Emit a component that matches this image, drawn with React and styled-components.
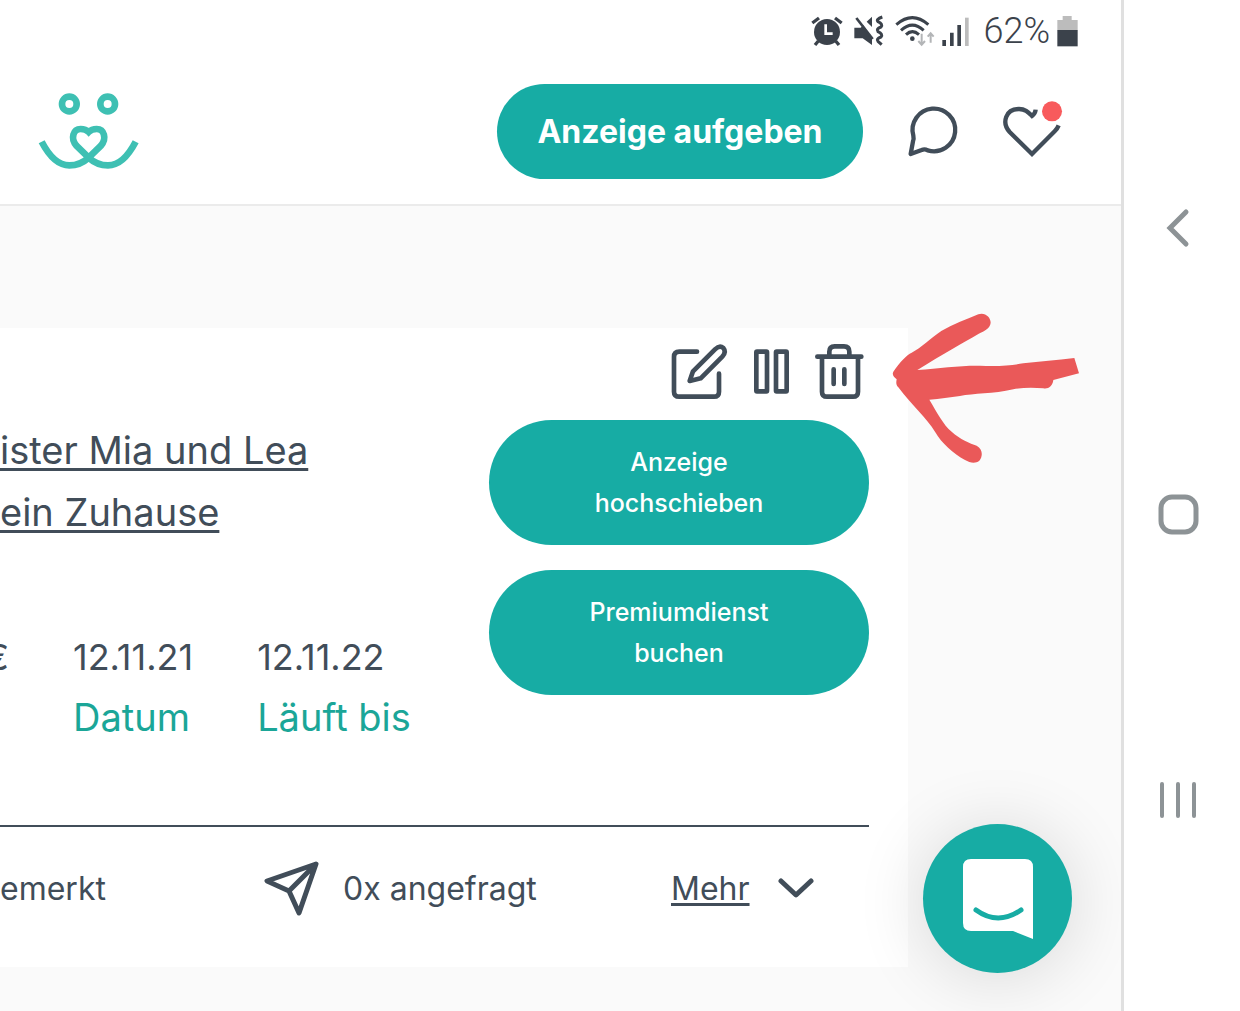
import React from "react";

import styled, {createGlobalStyle} from "styled-components";

const teal = "#17aca4";
const slate = "#414d59";

const GlobalStyle = createGlobalStyle`
    * {
      box-sizing: border-box;
    }

    body {
      margin: 0;
      background: #fff;
      color: ${slate};
      font-family: Inter, "Liberation Sans", sans-serif;
    }

    button {
      border: 0;
      padding: 0;
      background: none;
      color: inherit;
      font: inherit;
      cursor: pointer;
    }

    svg {
      display: block;
      flex: none;
    }
`;

const Page = styled.div`
    display: grid;
    grid-template-columns: minmax(0, 1fr) 119px;
    min-height: 100vh;
`;

const Screen = styled.div`
    position: relative;
    display: flex;
    flex-direction: column;
    overflow: hidden;
    background: #fafafa;
`;

const StatusBar = styled.div`
    display: flex;
    align-items: center;
    justify-content: flex-end;
    gap: 7px;
    height: 59px;
    padding: 2px 43px 0 0;
    background: #fff;
    color: #3b424b;
`;

const BatteryLevel = styled.span`
    font-family: Roboto, sans-serif;
    font-size: 36px;
    font-weight: 300;
    line-height: 40px;
`;

const Header = styled.header`
    display: flex;
    align-items: center;
    gap: 44px;
    height: 147px;
    padding: 0 58px 0 37px;
    border-bottom: 2px solid #ebebeb;
    background: #fff;
`;

const LogoLink = styled.a`
    margin-right: auto;
    color: #3ec0b3;
`;

const Pill = styled.button`
    border-radius: 64px;
    background: ${teal};
    color: #fff;
`;

const PostButton = styled(Pill)`
    min-width: 366px;
    height: 95px;
    font-size: 32px;
    font-weight: 700;
`;

const IconButton = styled.button`
    svg {
      overflow: visible;
    }
`;

const Card = styled.article`
    position: relative;
    margin: 122px 213px 44px 0;
    padding-right: 39px;
    background: #fff;
`;

const CardBody = styled.div`
    display: grid;
    grid-template-columns: minmax(0, 1fr) 380px;
    min-height: 497px;
    padding-top: 15px;
`;

const Info = styled.div`
    padding-top: 76px;
`;

const Title = styled.h2`
    margin: 0 0 84px;
    font-size: 38px;
    font-weight: 400;
    line-height: 62px;

    a {
      color: inherit;
      text-decoration-thickness: 3px;
      text-underline-offset: 4px;
    }
`;

const Facts = styled.dl`
    display: flex;
    gap: 64px;
    margin: 0 0 0 -15px;
`;

const Fact = styled.div`
    display: flex;
    flex-direction: column-reverse;
    justify-content: flex-end;
    min-height: 120px;
    line-height: 60px;

    dt {
      color: #1ba698;
      font-size: 38px;
    }

    dd {
      margin: 0;
      font-size: 36px;
    }
`;

const Actions = styled.div`
    display: flex;
    flex-direction: column;
    gap: 25px;
`;

const Tools = styled.div`
    display: flex;
    justify-content: flex-end;
    gap: 26px;
    padding-right: 5px;
    margin-bottom: -5px;
`;

const ActionButton = styled(Pill)`
    height: 125px;
    padding: 0 80px;
    font-size: 25px;
    font-weight: 500;
    line-height: 41px;
`;

const CardFooter = styled.footer`
    display: grid;
    grid-template-columns: 263px 408px 1fr;
    align-items: center;
    height: 142px;
    padding-bottom: 18px;
    border-top: 2px solid ${slate};
    font-size: 32px;
`;

const Stat = styled.span`
    display: flex;
    align-items: center;
    gap: 23px;
`;

const MoreButton = styled.button`
    display: flex;
    align-items: center;
    gap: 28px;

    span {
      text-decoration: underline;
      text-decoration-thickness: 3px;
      text-underline-offset: 3px;
    }
`;

const Arrow = styled.svg`
    position: absolute;
    top: -16px;
    left: calc(100% - 16px);
`;

const ChatLauncher = styled.button`
    position: absolute;
    right: 49px;
    bottom: 38px;
    display: grid;
    place-items: center;
    width: 149px;
    height: 149px;
    border-radius: 50%;
    background: ${teal};
    box-shadow: 0 4px 70px rgba(0, 0, 0, 0.14);
`;

const PhoneNav = styled.nav`
    display: flex;
    flex-direction: column;
    align-items: center;
    justify-content: space-around;
    padding: 85px 8px 68px 0;
    border-left: 3px solid #e0e0e0;
    color: #8d9396;
`;

const StatusIcons = () => (
    <>
        <svg width="34" height="32" viewBox="66 42 102 96" fill="none" stroke="currentColor" strokeWidth="10">
            <circle cx="114" cy="93" r="39" fill="currentColor" stroke="none"/>
            <path d="M70 66L90 51M138 51L158 66M88 120L78 132M140 120L150 132"/>
            <path d="M110 70V98H131" stroke="#fff" strokeWidth="8"/>
        </svg>
        <svg width="36" height="32" viewBox="190 42 108 96" fill="currentColor">
            <path d="M197 80H216L224 73L250 110V132L222 112H197Z"/>
            <path d="M234 62L250 47V78Z"/>
            <path d="M203 51L252 114" fill="none" stroke="currentColor" strokeWidth="8"/>
            <path d="M281 48Q261 55 268 62Q284 70 277 78Q261 84 268 92Q284 100 277 108Q261 114 268 121L279 131" fill="none" stroke="currentColor" strokeWidth="9"/>
        </svg>
        <svg width="40" height="32" viewBox="318 42 120 96" fill="none" stroke="currentColor" strokeWidth="9">
            <path d="M322 71Q370 29 418 71M336 88Q370 57 404 88M351 101Q370 83 390 101"/>
            <circle cx="370" cy="113" r="7" fill="currentColor" stroke="none"/>
            <path d="M398 98V130M388 120L398 131L408 120M425 125V98M416 107L425 97L434 107" stroke="#b3b5b7" strokeWidth="6"/>
        </svg>
        <svg width="34" height="32" viewBox="460 42 102 96" fill="currentColor">
            <path d="M461 117H472V135H461ZM484 95H495V135H484ZM506 72H517V135H506Z"/>
            <path d="M529 50H540V135H529Z" fill="#bcbcbc"/>
        </svg>
    </>
);

const Battery = () => (
    <svg width="21" height="32" viewBox="798 42 63 96">
        <path d="M815 45H842V57H860V88H799V57H815Z" fill="#bcbcbc"/>
        <path d="M799 87H860V136H799Z" fill="currentColor"/>
    </svg>
);

const Logo = () => (
    <svg width="103" height="78" viewBox="111 68 309 234" fill="none" stroke="currentColor" strokeWidth="20">
        <circle cx="208" cy="101" r="22"/>
        <circle cx="323" cy="101" r="22"/>
        <path d="M125 214C150 262 178 285 208 285C238 285 255 272 266 262L302 227C322 204 312 176 290 176C278 176 271 180 266 185C261 180 254 176 242 176C220 176 210 204 230 227L266 262C277 272 294 285 324 285C354 285 382 262 407 214"/>
    </svg>
);

const ChatIcon = () => (
    <svg width="52" height="52" viewBox="352 318 156 156" fill="none" stroke="currentColor" strokeWidth="13" strokeLinejoin="round">
        <path d="M363 462L370 424Q373 416 371 407A64 64 0 1 1 414 451Q405 446 396 450Z"/>
    </svg>
);

const HeartIcon = () => (
    <svg width="60" height="60" viewBox="640 305 180 180" fill="none" stroke="currentColor" strokeWidth="13">
        <path d="M807 375Q803 385 795 393L727 461L660 395C635 367 648 326 688 326C708 326 716 336 727 347Q737 340 738 328"/>
        <circle cx="787" cy="333" r="30" fill="#f85a5c" stroke="none"/>
    </svg>
);

const EditIcon = () => (
    <svg width="57" height="57" viewBox="97 128 171 171" fill="none" stroke="currentColor" strokeWidth="14" strokeLinecap="round" strokeLinejoin="round">
        <path d="M175 154H122Q106 154 106 170V274Q106 289 122 289H226Q241 289 241 274V220"/>
        <path d="M153 242L163 213L229 147Q243 133 254 143Q264 155 251 169L186 234Z"/>
    </svg>
);

const PauseIcon = () => (
    <svg width="35" height="57" viewBox="339 128 105 171" fill="none" stroke="currentColor" strokeWidth="14">
        <rect x="346" y="154" width="32" height="119" rx="2"/>
        <rect x="405" y="154" width="32" height="119" rx="2"/>
    </svg>
);

const TrashIcon = () => (
    <svg width="49" height="57" viewBox="526 128 147 171" fill="none" stroke="currentColor" strokeWidth="14" strokeLinecap="round">
        <path d="M533 169H665M569 166V154Q569 138 585 138H613Q629 138 629 154V166"/>
        <path d="M547 172V274Q547 289 562 289H640Q655 289 655 274V172M582 207V251M614 207V251"/>
    </svg>
);

const SendIcon = () => (
    <svg width="57" height="57" viewBox="0 0 57 57" fill="none" stroke="currentColor" strokeWidth="5" strokeLinejoin="round">
        <path d="M53 4L4 21L26 31L36 53ZM53 4L26 31"/>
    </svg>
);

const ChevronIcon = () => (
    <svg width="36" height="20" viewBox="0 0 36 20" fill="none" stroke="currentColor" strokeWidth="5" strokeLinecap="round" strokeLinejoin="round">
        <path d="M3 3L18 17L33 3"/>
    </svg>
);

const LauncherIcon = () => (
    <svg width="70" height="80" viewBox="0 0 70 80">
        <path d="M8 0H62Q70 0 70 8V80L50 72H8Q0 72 0 64V8Q0 0 8 0Z" fill="#fff"/>
        <path d="M13 51Q35 67 58 51" fill="none" stroke={teal} strokeWidth="5" strokeLinecap="round"/>
    </svg>
);

function App() {
    return (
        <Page>
            <GlobalStyle/>
            <Screen>
                <StatusBar>
                    <StatusIcons/>
                    <BatteryLevel>62%</BatteryLevel>
                    <Battery/>
                </StatusBar>
                <Header>
                    <LogoLink href="#" aria-label="Startseite"><Logo/></LogoLink>
                    <PostButton>Anzeige aufgeben</PostButton>
                    <IconButton aria-label="Nachrichten"><ChatIcon/></IconButton>
                    <IconButton aria-label="Merkliste"><HeartIcon/></IconButton>
                </Header>
                <Card>
                    <CardBody>
                        <Info>
                            <Title>
                                <a href="#">ister Mia und Lea<br/>ein Zuhause</a>
                            </Title>
                            <Facts>
                                <Fact>
                                    <dd>€</dd>
                                </Fact>
                                <Fact>
                                    <dt>Datum</dt>
                                    <dd>12.11.21</dd>
                                </Fact>
                                <Fact>
                                    <dt>Läuft bis</dt>
                                    <dd>12.11.22</dd>
                                </Fact>
                            </Facts>
                        </Info>
                        <Actions>
                            <Tools>
                                <IconButton aria-label="Bearbeiten"><EditIcon/></IconButton>
                                <IconButton aria-label="Pausieren"><PauseIcon/></IconButton>
                                <IconButton aria-label="Löschen"><TrashIcon/></IconButton>
                            </Tools>
                            <ActionButton>Anzeige hochschieben</ActionButton>
                            <ActionButton>Premiumdienst buchen</ActionButton>
                        </Actions>
                    </CardBody>
                    <CardFooter>
                        <Stat>emerkt</Stat>
                        <Stat><SendIcon/>0x angefragt</Stat>
                        <MoreButton><span>Mehr</span><ChevronIcon/></MoreButton>
                    </CardFooter>
                    <Arrow width="188" height="152" viewBox="756 36 564 456" fill="#ea5959" aria-hidden="true">
                        <path d="M760 215C780 185 800 165 815 158C845 142 870 115 905 92C940 72 980 58 1015 43C1035 36 1052 52 1052 68C1050 85 1035 92 1015 102C975 125 905 165 832 210C900 205 960 196 1020 197C1080 200 1120 195 1150 190C1200 185 1250 180 1303 174L1317 220L1240 240C1238 258 1225 268 1210 265C1180 262 1150 262 1120 268C1060 282 1000 280 960 288C930 292 900 297 868 299C890 335 910 375 935 395C960 418 990 430 1010 437C1030 448 1028 470 1018 482C1005 492 990 488 975 480C940 460 905 430 885 395C860 355 815 315 775 262C768 255 768 248 770 238C762 232 755 225 760 215Z"/>
                    </Arrow>
                </Card>
                <ChatLauncher aria-label="Chat öffnen"><LauncherIcon/></ChatLauncher>
            </Screen>
            <PhoneNav>
                <IconButton aria-label="Zurück">
                    <svg width="40" height="40" viewBox="0 0 40 40" fill="none" stroke="currentColor" strokeWidth="5" strokeLinecap="round">
                        <path d="M28 4L12 20L28 36"/>
                    </svg>
                </IconButton>
                <IconButton aria-label="Home">
                    <svg width="40" height="40" viewBox="0 0 40 40" fill="none" stroke="currentColor" strokeWidth="5">
                        <rect x="3" y="3" width="35" height="35" rx="11"/>
                    </svg>
                </IconButton>
                <IconButton aria-label="Letzte Apps">
                    <svg width="40" height="40" viewBox="0 0 40 40" fill="none" stroke="currentColor" strokeWidth="4" strokeLinecap="round">
                        <path d="M4 4V36M20 4V36M36 4V36"/>
                    </svg>
                </IconButton>
            </PhoneNav>
        </Page>
    );
}

export default App;
